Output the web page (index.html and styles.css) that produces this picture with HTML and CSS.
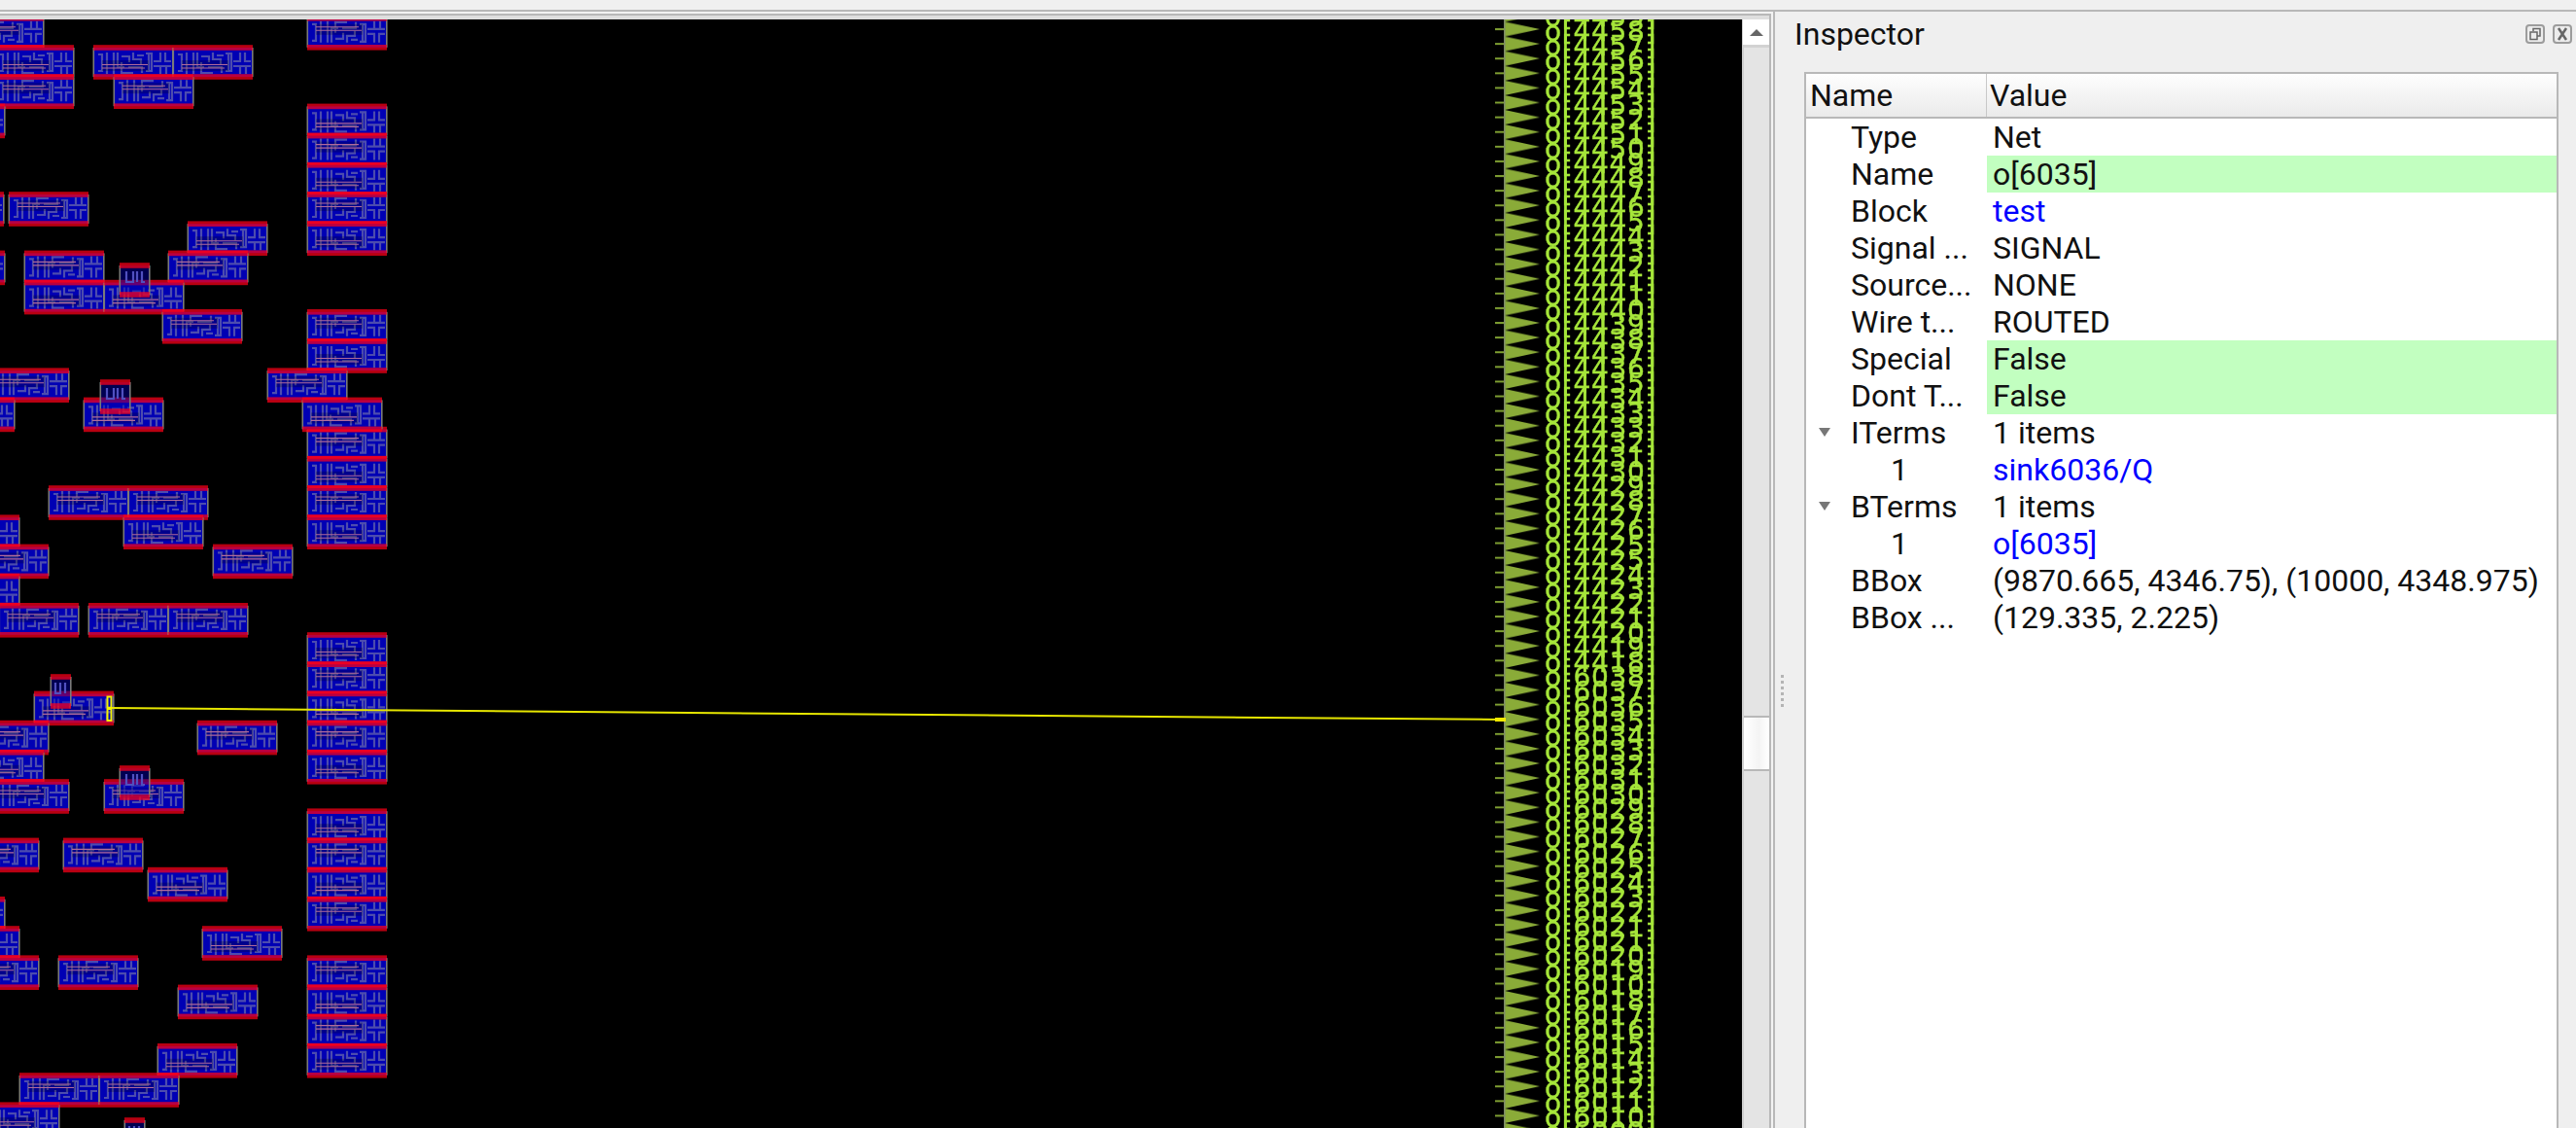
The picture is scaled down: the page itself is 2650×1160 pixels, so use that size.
FILE: index.html
```html
<!DOCTYPE html>
<html lang="en">
<head>
<meta charset="utf-8">
<title>Inspector</title>
<link rel="stylesheet" href="styles.css">
</head>
<body>
<div class="window">
  <div class="menubar"></div>
  <div class="main">
    <div class="outer-frame">
      <div class="inner-frame">
        <div class="view">
          <svg class="layout" width="1792" height="1140" viewBox="0 20 1792 1140" xmlns="http://www.w3.org/2000/svg">
            <defs>
              <g id="e">
                <rect class="body" x="0" y="0" width="82" height="30"/>
                <rect class="edge" x="-0.5" y="0" width="1.6" height="30"/>
                <rect class="edge" x="81" y="0" width="1.6" height="30"/>
                <path class="metal" d="M5 7H9V24H5M14 5V27M21 5V27M25 5V20H32M29 9H37V15M29 15V26H41M41 5V12H49V17M36 20H50V26M45 8H52M54 6H60V24H54M57 6V24M62 14H69V5M62 19H80M69 19V27M74 5V14H80M75 19V27"/>
                <rect class="shade" x="9" y="13" width="48" height="11"/>
                <path class="poly" d="M9 17.5H56M9 21H53"/>
                <rect class="rail" x="0" y="-2.8" width="82" height="5.6"/>
                <rect class="rail" x="0" y="27.2" width="82" height="5.6"/>
              </g>
              <g id="f"><use href="#e" transform="matrix(1 0 0 -1 0 30)"/></g>
              <g id="s">
                <rect class="body-over" x="0" y="0" width="31" height="30"/>
                <rect class="edge" x="-0.5" y="0" width="1.6" height="30"/>
                <rect class="edge" x="30" y="0" width="1.6" height="30"/>
                <path class="metal metal-over" d="M7 6V17H14V6M18 17V6M23 6V17H26"/>
                <rect class="rail" x="0" y="-2.8" width="31" height="5.6"/>
                <rect class="rail" x="0" y="27.2" width="31" height="5.6"/>
              </g>
              <g id="t">
                <rect class="body-over" x="0" y="0" width="21" height="30"/>
                <rect class="edge" x="-0.5" y="0" width="1.6" height="30"/>
                <rect class="edge" x="20" y="0" width="1.6" height="30"/>
                <path class="metal metal-over" d="M5 6V17H10V6M15 17V6"/>
                <rect class="rail" x="0" y="-2.8" width="21" height="5.6"/>
                <rect class="rail" x="0" y="27.2" width="21" height="5.6"/>
              </g>
              <pattern id="pins" patternUnits="userSpaceOnUse" x="1538" y="22.45" width="46" height="15.1">
                <path class="pin-shape" d="M10 0V15.1L46 7.55Z"/>
                <rect class="pin-stub" x="0" y="6.6" width="10" height="2"/>
              </pattern>
            </defs>

            <g class="cells">
              <use href="#f" x="316" y="18.8"/><use href="#e" x="316" y="109.4"/><use href="#f" x="316" y="139.6"/><use href="#e" x="316" y="169.8"/><use href="#f" x="316" y="200"/><use href="#e" x="316" y="230.2"/>
              <use href="#f" x="316" y="320.8"/><use href="#e" x="316" y="351"/>
              <use href="#f" x="316" y="441.6"/><use href="#e" x="316" y="471.8"/><use href="#f" x="316" y="502"/><use href="#e" x="316" y="532.2"/>
              <use href="#e" x="316" y="653"/><use href="#f" x="316" y="683.2"/><use href="#e" x="316" y="713.4"/><use href="#f" x="316" y="743.6"/><use href="#e" x="316" y="773.8"/>
              <use href="#e" x="316" y="834.2"/><use href="#f" x="316" y="864.4"/><use href="#e" x="316" y="894.6"/><use href="#f" x="316" y="924.8"/>
              <use href="#f" x="316" y="985.2"/><use href="#e" x="316" y="1015.4"/><use href="#f" x="316" y="1045.6"/><use href="#e" x="316" y="1075.8"/>

              <use href="#f" x="-37" y="18.8"/>
              <use href="#e" x="-6" y="49"/><use href="#e" x="96" y="49"/><use href="#e" x="178" y="49"/>
              <use href="#f" x="-6" y="79.2"/><use href="#f" x="117" y="79.2"/>
              <use href="#e" x="-77" y="109.4"/>
              <use href="#f" x="-78" y="200"/><use href="#f" x="9" y="200"/>
              <use href="#e" x="193" y="230.2"/>
              <use href="#f" x="-77" y="260.4"/><use href="#f" x="25" y="260.4"/><use href="#f" x="173" y="260.4"/>
              <use href="#e" x="25" y="290.6"/><use href="#e" x="107" y="290.6"/>
              <use href="#f" x="167" y="320.8"/>
              <use href="#f" x="-11" y="381.2"/><use href="#f" x="275" y="381.2"/>
              <use href="#e" x="-67" y="411.4"/><use href="#e" x="86" y="411.4"/><use href="#e" x="311" y="411.4"/>
              <use href="#f" x="50" y="502"/><use href="#f" x="132" y="502"/>
              <use href="#e" x="-62" y="532.2"/><use href="#e" x="127" y="532.2"/>
              <use href="#f" x="-32" y="562.4"/><use href="#f" x="219" y="562.4"/>
              <use href="#e" x="-62" y="592.6"/>
              <use href="#f" x="-1" y="622.8"/><use href="#f" x="91" y="622.8"/><use href="#f" x="173" y="622.8"/>
              <use href="#e" x="35" y="713.4"/>
              <use href="#f" x="-32" y="743.6"/><use href="#f" x="203" y="743.6"/>
              <use href="#e" x="-37" y="773.8"/>
              <use href="#f" x="-11" y="804"/><use href="#f" x="107" y="804"/>
              <use href="#f" x="-42" y="864.4"/><use href="#f" x="65" y="864.4"/>
              <use href="#e" x="152" y="894.6"/>
              <use href="#f" x="-77" y="924.8"/>
              <use href="#e" x="-62" y="955"/><use href="#e" x="208" y="955"/>
              <use href="#f" x="-42" y="985.2"/><use href="#f" x="60" y="985.2"/>
              <use href="#e" x="183" y="1015.4"/>
              <use href="#e" x="162" y="1075.8"/>
              <use href="#f" x="20" y="1106"/><use href="#f" x="102" y="1106"/>
              <use href="#e" x="-21" y="1136.2"/>

              <use href="#s" x="123" y="273"/>
              <use href="#s" x="103" y="393"/>
              <use href="#t" x="52" y="696"/>
              <use href="#s" x="123" y="790"/>
              <use href="#t" x="128" y="1152"/>
            </g>

            <rect class="pins" x="1538" y="20" width="46" height="1140"/>
            <rect class="pin-edge" x="1547" y="20" width="1.5" height="1140"/>

            <text class="pin-labels" x="1589" y="11.8"><tspan x="1589" dy="15.1">o[4459]</tspan><tspan x="1589" dy="15.1">o[4458]</tspan><tspan x="1589" dy="15.1">o[4457]</tspan><tspan x="1589" dy="15.1">o[4456]</tspan><tspan x="1589" dy="15.1">o[4455]</tspan><tspan x="1589" dy="15.1">o[4454]</tspan><tspan x="1589" dy="15.1">o[4453]</tspan><tspan x="1589" dy="15.1">o[4452]</tspan><tspan x="1589" dy="15.1">o[4451]</tspan><tspan x="1589" dy="15.1">o[4450]</tspan><tspan x="1589" dy="15.1">o[4449]</tspan><tspan x="1589" dy="15.1">o[4448]</tspan><tspan x="1589" dy="15.1">o[4447]</tspan><tspan x="1589" dy="15.1">o[4446]</tspan><tspan x="1589" dy="15.1">o[4445]</tspan><tspan x="1589" dy="15.1">o[4444]</tspan><tspan x="1589" dy="15.1">o[4443]</tspan><tspan x="1589" dy="15.1">o[4442]</tspan><tspan x="1589" dy="15.1">o[4441]</tspan><tspan x="1589" dy="15.1">o[4441]</tspan><tspan x="1589" dy="15.1">o[4440]</tspan><tspan x="1589" dy="15.1">o[4439]</tspan><tspan x="1589" dy="15.1">o[4438]</tspan><tspan x="1589" dy="15.1">o[4437]</tspan><tspan x="1589" dy="15.1">o[4436]</tspan><tspan x="1589" dy="15.1">o[4435]</tspan><tspan x="1589" dy="15.1">o[4434]</tspan><tspan x="1589" dy="15.1">o[4433]</tspan><tspan x="1589" dy="15.1">o[4433]</tspan><tspan x="1589" dy="15.1">o[4432]</tspan><tspan x="1589" dy="15.1">o[4431]</tspan><tspan x="1589" dy="15.1">o[4430]</tspan><tspan x="1589" dy="15.1">o[4429]</tspan><tspan x="1589" dy="15.1">o[4428]</tspan><tspan x="1589" dy="15.1">o[4427]</tspan><tspan x="1589" dy="15.1">o[4426]</tspan><tspan x="1589" dy="15.1">o[4425]</tspan><tspan x="1589" dy="15.1">o[4425]</tspan><tspan x="1589" dy="15.1">o[4424]</tspan><tspan x="1589" dy="15.1">o[4423]</tspan><tspan x="1589" dy="15.1">o[4422]</tspan><tspan x="1589" dy="15.1">o[4421]</tspan><tspan x="1589" dy="15.1">o[4420]</tspan><tspan x="1589" dy="15.1">o[4419]</tspan><tspan x="1589" dy="15.1">o[4418]</tspan><tspan x="1589" dy="15.1">o[6038]</tspan><tspan x="1589" dy="15.1">o[6037]</tspan><tspan x="1589" dy="15.1">o[6036]</tspan><tspan x="1589" dy="15.1">o[6035]</tspan><tspan x="1589" dy="15.1">o[6034]</tspan><tspan x="1589" dy="15.1">o[6033]</tspan><tspan x="1589" dy="15.1">o[6032]</tspan><tspan x="1589" dy="15.1">o[6031]</tspan><tspan x="1589" dy="15.1">o[6030]</tspan><tspan x="1589" dy="15.1">o[6029]</tspan><tspan x="1589" dy="15.1">o[6028]</tspan><tspan x="1589" dy="15.1">o[6027]</tspan><tspan x="1589" dy="15.1">o[6026]</tspan><tspan x="1589" dy="15.1">o[6025]</tspan><tspan x="1589" dy="15.1">o[6024]</tspan><tspan x="1589" dy="15.1">o[6023]</tspan><tspan x="1589" dy="15.1">o[6022]</tspan><tspan x="1589" dy="15.1">o[6021]</tspan><tspan x="1589" dy="15.1">o[6021]</tspan><tspan x="1589" dy="15.1">o[6020]</tspan><tspan x="1589" dy="15.1">o[6019]</tspan><tspan x="1589" dy="15.1">o[6010]</tspan><tspan x="1589" dy="15.1">o[6018]</tspan><tspan x="1589" dy="15.1">o[6017]</tspan><tspan x="1589" dy="15.1">o[6016]</tspan><tspan x="1589" dy="15.1">o[6015]</tspan><tspan x="1589" dy="15.1">o[6014]</tspan><tspan x="1589" dy="15.1">o[6013]</tspan><tspan x="1589" dy="15.1">o[6012]</tspan><tspan x="1589" dy="15.1">o[6011]</tspan><tspan x="1589" dy="15.1">o[6010]</tspan><tspan x="1589" dy="15.1">o[6009]</tspan></text>

            <path class="net" d="M114 728L1548 740"/>
            <path class="net-pin" d="M1538 740H1549"/>
            <path class="net-cell" d="M110.5 716.5H114.5V728H110.5ZM110.5 729H114.5V741H110.5Z"/>
          </svg>
          <div class="scrollbar">
            <div class="scroll-btn"><span class="arrow-up"></span></div>
            <div class="scroll-track scroll-track-top"></div>
            <div class="scroll-thumb"></div>
            <div class="scroll-track scroll-track-bottom"></div>
          </div>
        </div>
      </div>
    </div>

    <aside class="dock">
      <div class="dock-title">
        <span class="dock-name">Inspector</span>
        <div class="dock-buttons">
          <span class="dock-btn"><svg width="16" height="16" viewBox="0 0 16 16" xmlns="http://www.w3.org/2000/svg"><path class="dock-glyph" d="M6 5V2.5H13V10H10.5M3 6H10V13.5H3Z"/></svg></span>
          <span class="dock-btn"><svg width="16" height="16" viewBox="0 0 16 16" xmlns="http://www.w3.org/2000/svg"><path class="dock-glyph dock-glyph-x" d="M4 2L12 14M12 2L4 14"/></svg></span>
        </div>
      </div>
      <div class="dock-body">
        <div class="splitter"><i></i><i></i><i></i><i></i><i></i><i></i></div>
        <div class="tree">
          <div class="tree-head">
            <div class="head-name">Name</div>
            <div class="head-value">Value</div>
          </div>
          <div class="row"><div class="name">Type</div><div class="value">Net</div></div>
          <div class="row"><div class="name">Name</div><div class="value edit">o[6035]</div></div>
          <div class="row"><div class="name">Block</div><div class="value link">test</div></div>
          <div class="row"><div class="name">Signal ...</div><div class="value">SIGNAL</div></div>
          <div class="row"><div class="name">Source...</div><div class="value">NONE</div></div>
          <div class="row"><div class="name">Wire t...</div><div class="value">ROUTED</div></div>
          <div class="row"><div class="name">Special</div><div class="value edit">False</div></div>
          <div class="row"><div class="name">Dont T...</div><div class="value edit">False</div></div>
          <div class="row"><div class="name"><span class="twist"></span>ITerms</div><div class="value">1 items</div></div>
          <div class="row"><div class="name child">1</div><div class="value link">sink6036/Q</div></div>
          <div class="row"><div class="name"><span class="twist"></span>BTerms</div><div class="value">1 items</div></div>
          <div class="row"><div class="name child">1</div><div class="value link">o[6035]</div></div>
          <div class="row"><div class="name">BBox</div><div class="value">(9870.665, 4346.75), (10000, 4348.975)</div></div>
          <div class="row"><div class="name">BBox ...</div><div class="value">(129.335, 2.225)</div></div>
        </div>
      </div>
    </aside>
  </div>
</div>
</body>
</html>
```
FILE: styles.css
```css
* { box-sizing: border-box; }
html, body { margin: 0; height: 100%; overflow: hidden; }
body { background: #efefef; font-family: Roboto, "Open Sans", sans-serif; color: #111; }

.window { width: 2650px; height: 1160px; display: flex; flex-direction: column; }
.menubar { height: 10px; background: #f0f0f0; flex: none; }
.main { flex: 1; display: flex; border-top: 2px solid #b8b8b8; min-height: 0; }

.outer-frame { width: 1826px; flex: none; padding: 2px 2px 0 0; border-right: 2px solid #b8b8b8; background: #f2f2f2; }
.inner-frame { height: 100%; border-top: 2px solid #b8b8b8; border-right: 2px solid #b8b8b8; padding-top: 4px; background: #dedede; }
.view { display: flex; height: 1140px; }

.layout { display: block; flex: none; background: #000; filter: blur(0.6px); }
.body { fill: #0000b4; }
.body-over { fill: #0000b4; fill-opacity: 0.45; }
.edge { fill: #7a7a7a; }
.metal { fill: none; stroke: #4c4cae; stroke-width: 2.2; }
.metal-over { stroke: #5050c0; }
.shade { fill: #000; fill-opacity: 0.22; }
.poly { fill: none; stroke: #b06a9c; stroke-width: 1.1; }
.rail { fill: #ff0018; fill-opacity: 0.72; }
.pins { fill: url(#pins); }
.pin-shape { fill: #8aab38; }
.pin-stub { fill: #7f9f32; }
.pin-edge { fill: #7d8a68; }
.pin-labels { font-family: "DejaVu Sans", sans-serif; font-size: 28px; letter-spacing: 0.7px; fill: #a6e63a; stroke: #a6e63a; stroke-width: 0.4px; }
.net { fill: none; stroke: #e6e600; stroke-width: 2; }
.net-pin { fill: none; stroke: #f0e800; stroke-width: 4; }
.net-cell { fill: none; stroke: #f4f400; stroke-width: 2; }

.scrollbar { width: 28px; flex: none; display: flex; flex-direction: column; background: #e4e4e4; border-left: 2px solid #cfcfcf; }
.scroll-btn { height: 26px; flex: none; background: #fff; display: flex; align-items: center; justify-content: center; margin-left: -1px; }
.arrow-up { width: 0; height: 0; border-left: 7px solid transparent; border-right: 7px solid transparent; border-bottom: 7px solid #666; }
.scroll-track { background: #e4e4e4; }
.scroll-track-top { height: 692px; flex: none; border-top: 3px solid #d2d2d2; border-bottom: 2px solid #b8b8b8; }
.scroll-thumb { height: 53px; flex: none; background: linear-gradient(90deg, #ffffff, #f4f4f4 60%, #ffffff); }
.scroll-track-bottom { flex: 1; border-top: 2px solid #b8b8b8; }

.dock { flex: 1; display: flex; flex-direction: column; min-width: 0; }
.dock-title { height: 46px; margin-bottom: 16px; padding: 0 4px 0 20px; display: flex; align-items: center; justify-content: space-between; flex: none; }
.dock-name { font-size: 32px; line-height: 40px; color: #111; }
.dock-buttons { display: flex; gap: 8px; }
.dock-btn { width: 20px; height: 20px; border: 2px solid #9c9c9c; border-radius: 4px; display: flex; align-items: center; justify-content: center; background: #ececec; }
.dock-glyph { fill: none; stroke: #666; stroke-width: 1.5; }
.dock-glyph-x { stroke-width: 2.5; }

.dock-body { flex: 1; display: flex; min-height: 0; }
.splitter { width: 30px; flex: none; padding: 620px 0 0 6px; display: flex; flex-direction: column; gap: 3px; }
.splitter i { display: block; width: 3px; height: 3px; background: #b4b4b4; }

.tree { width: 776px; flex: none; background: #fff; border: 2px solid #b8b8b8; border-bottom: 0; font-size: 32px; }
.tree-head { height: 46px; display: flex; align-items: center; border-bottom: 2px solid #b8b8b8; background: linear-gradient(#fefefe, #eaeaea); }
.head-name { width: 186px; flex: none; padding-left: 4px; height: 100%; line-height: 44px; border-right: 1px solid #c8c8c8; }
.head-value { padding-left: 3px; line-height: 44px; }
.row { display: flex; height: 38px; line-height: 38px; white-space: nowrap; }
.name { width: 186px; flex: none; padding-left: 46px; position: relative; }
.name.child { padding-left: 87px; }
.value { flex: 1; padding-left: 6px; }
.edit { background: #c2ffc0; }
.link { color: #0000ff; }
.twist { position: absolute; left: 13px; top: 14px; width: 0; height: 0; border-left: 6px solid transparent; border-right: 6px solid transparent; border-top: 9px solid #777; }
```
